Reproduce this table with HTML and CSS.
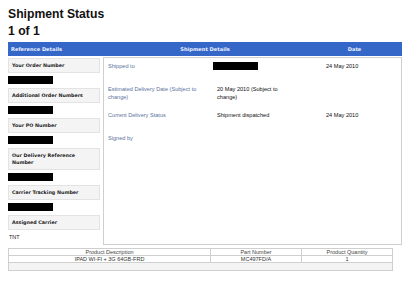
FILE: index.html
```html
<!DOCTYPE html>
<html>
<head>
<meta charset="utf-8">
<link rel="stylesheet" href="styles.css">
</head>
<body>
<div class="title">Shipment Status</div>
<div class="title second">1 of 1</div>
<div class="bar">
  <div class="bar-ref">Reference Details</div>
  <div class="bar-ship">Shipment Details</div>
  <div class="bar-date">Date</div>
</div>
<div class="main">
  <div class="left">
    <div class="label">Your Order Number</div>
    <div class="redact"></div>
    <div class="label">Additional Order Numbers</div>
    <div class="redact"></div>
    <div class="label">Your PO Number</div>
    <div class="redact"></div>
    <div class="label">Our Delivery Reference Number</div>
    <div class="redact"></div>
    <div class="label">Carrier Tracking Number</div>
    <div class="redact"></div>
    <div class="label">Assigned Carrier</div>
    <div class="value">TNT</div>
  </div>
  <div class="panel">
    <div class="plabel">Shipped to</div>
    <div class="pval"><div class="redact small"></div></div>
    <div class="pdate">24 May 2010</div>

    <div class="plabel">Estimated Delivery Date (Subject to change)</div>
    <div class="pval indent">20 May 2010 (Subject to change)</div>
    <div class="pdate"></div>

    <div class="plabel">Current Delivery Status</div>
    <div class="pval indent">Shipment dispatched</div>
    <div class="pdate">24 May 2010</div>

    <div class="plabel">Signed by</div>
    <div class="pval"></div>
    <div class="pdate"></div>
  </div>
</div>
<table class="products">
  <tr><th class="c1">Product Description</th><th class="c2">Part Number</th><th class="c3">Product Quantity</th></tr>
  <tr><td>IPAD WI-FI + 3G 64GB-FRD</td><td>MC497FD/A</td><td>1</td></tr>
  <tr><td colspan="3" class="empty"></td></tr>
</table>
</body>
</html>
```
FILE: styles.css
```css
body {
  margin: 8px;
  background: #ffffff;
  font-family: "Liberation Sans", Arial, sans-serif;
  color: #000;
}
.title {
  font-size: 12.2px;
  font-weight: bold;
  line-height: 13px;
  color: #111;
}
.title.second { margin-top: 4px; }
.bar {
  height: 14px;
  background: #3567c9;
  display: grid;
  grid-template-columns: 95px 204px 1fr;
  align-items: center;
  color: #eef2ff;
  font-family: "DejaVu Sans", Verdana, sans-serif;
  font-weight: bold;
  font-size: 5.1px;
  margin-top: 4px;
}
.bar-ref { padding-left: 3px; }
.bar-ship { text-align: center; }
.bar-date { text-align: center; }
.main {
  display: flex;
  gap: 3px;
  margin-top: 1px;
  height: 188px;
}
.left {
  width: 92px;
  display: flex;
  flex-direction: column;
}
.label {
  background: #f4f4f4;
  border: 1px solid #e3e3e3;
  padding: 3px 3px;
  font-family: "DejaVu Sans", Verdana, sans-serif;
  font-weight: bold;
  font-size: 4.8px;
  line-height: 7px;
  color: #222;
  min-height: 7px;
  margin-top: 1px;
}
.redact {
  background: #000;
  width: 45px;
  height: 8px;
  margin: 3px 0 3px 0;
}
.value {
  font-family: "Liberation Sans", Arial, sans-serif;
  font-size: 5.4px;
  padding: 4px 1px;
  color: #222;
}
.panel {
  flex: 1;
  box-sizing: border-box;
  height: 188px;
  border: 1px solid #cfcfcf;
  padding: 4px 4px;
  display: grid;
  grid-template-columns: 105px 108px 1fr;
  grid-template-rows: 13px 16px 13px 13px;
  row-gap: 10px;
  align-content: start;
  font-size: 5.6px;
  line-height: 8px;
}
.plabel { color: #5a72a0; padding-right: 6px; }
.pval { color: #111; }
.pval.indent { padding-left: 4px; padding-right: 30px; }
.pdate { color: #111; padding-left: 5px; }
.redact.small { margin: 0; width: 45px; }
.products {
  width: 385px;
  margin-top: 3px;
  border-collapse: collapse;
  font-size: 5.5px;
  color: #333;
}
.products th, .products td {
  border: 1px solid #cfcfcf;
  height: 6px;
  padding: 0;
  line-height: 6px;
  font-weight: normal;
  text-align: center;
}
.products th { color: #444; }
.products .c1 { width: 201px; }
.products .c2 { width: 90px; }
.products .empty { background: #f4f4f4; height: 7px; }
```
